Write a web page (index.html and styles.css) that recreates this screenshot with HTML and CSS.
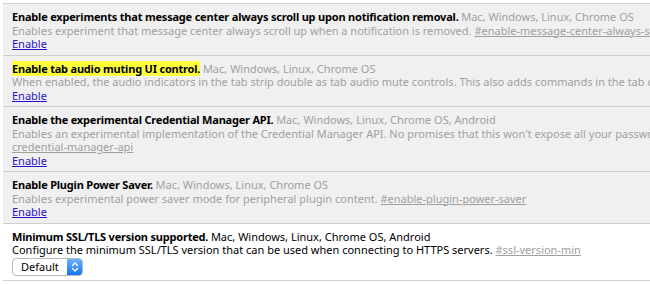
FILE: index.html
```html
<!DOCTYPE html>
<html lang="en">
<head>
  <meta charset="UTF-8" />
  <title>Experiments</title>
  <link rel="stylesheet" href="styles.css">
</head>
<body>
  <div class="experiments">

    <div class="experiment disabled">
      <div class="experiment-name">Enable experiments that message center always scroll up upon notification removal. <span class="platforms">Mac, Windows, Linux, Chrome OS</span></div>
      <div class="experiment-desc">Enables experiment that message center always scroll up when a notification is removed. <a class="permalink" href="#">#enable-message-center-always-scroll-up-upon-notification-removal</a></div>
      <a class="action" href="#">Enable</a>
    </div>

    <div class="experiment disabled">
      <div class="experiment-name"><span class="highlight">Enable tab audio muting UI control.</span> <span class="platforms">Mac, Windows, Linux, Chrome OS</span></div>
      <div class="experiment-desc">When enabled, the audio indicators in the tab strip double as tab audio mute controls. This also adds commands in the tab context menu.</div>
      <a class="action" href="#">Enable</a>
    </div>

    <div class="experiment disabled">
      <div class="experiment-name">Enable the experimental Credential Manager API. <span class="platforms">Mac, Windows, Linux, Chrome OS, Android</span></div>
      <div class="experiment-desc">Enables an experimental implementation of the Credential Manager API. No promises that this won't expose all your passwords to the world. <a class="permalink" href="#">#enable-<br>credential-manager-api</a></div>
      <a class="action" href="#">Enable</a>
    </div>

    <div class="experiment disabled">
      <div class="experiment-name">Enable Plugin Power Saver. <span class="platforms">Mac, Windows, Linux, Chrome OS</span></div>
      <div class="experiment-desc">Enables experimental power saver mode for peripheral plugin content. <a class="permalink" href="#">#enable-plugin-power-saver</a></div>
      <a class="action" href="#">Enable</a>
    </div>

    <div class="experiment">
      <div class="experiment-name">Minimum SSL/TLS version supported. <span class="platforms">Mac, Windows, Linux, Chrome OS, Android</span></div>
      <div class="experiment-desc">Configure the minimum SSL/TLS version that can be used when connecting to HTTPS servers. <a class="permalink" href="#">#ssl-version-min</a></div>
      <div class="select">
        <span class="select-label">Default</span>
        <span class="select-arrows">
          <svg width="8" height="12" viewBox="0 0 8 12">
            <path d="M1.5 4.5 L4 2 L6.5 4.5 M1.5 7.5 L4 10 L6.5 7.5" fill="none" stroke="#fff" stroke-width="1.3" stroke-linecap="round" stroke-linejoin="round"/>
          </svg>
        </span>
      </div>
    </div>

  </div>
</body>
</html>
```

FILE: styles.css
```css
html, body {
  overflow: hidden;
}

body {
  margin: 0;
  background: #fff;
  font-family: 'Noto Sans', 'DejaVu Sans', sans-serif;
  font-size: 11px;
  line-height: 13.5px;
  color: #000;
}

.experiments {
  width: 1000px;
  margin: 3px 0 0 3px;
  border-top: 1px solid #cfcfcf;
}

.experiment {
  padding: 6px 0 4px 9px;
  border-bottom: 1px solid #cfcfcf;
  white-space: nowrap;
}

.experiment.disabled {
  background: #f0f0f0;
}

.experiment-name {
  font-weight: bold;
  letter-spacing: -0.2px;
}

.platforms {
  font-weight: normal;
  letter-spacing: 0;
}

.disabled .platforms,
.disabled .experiment-desc {
  color: #a0a0a0;
}

.highlight {
  background: #ffff3c;
}

.permalink {
  color: #a0a0a0;
}

.action {
  color: #2a12cc;
}

.select {
  display: flex;
  align-items: stretch;
  width: 71px;
  height: 18px;
  margin-top: 1px;
  border: 1px solid #b8b8b8;
  border-radius: 4px;
  background: #fff;
  box-sizing: border-box;
  overflow: hidden;
}

.select-label {
  flex: 1;
  padding-left: 8px;
  line-height: 16px;
}

.select-arrows {
  width: 15px;
  display: flex;
  align-items: center;
  justify-content: center;
  background: linear-gradient(#6db3fb, #1574f1);
}
```
